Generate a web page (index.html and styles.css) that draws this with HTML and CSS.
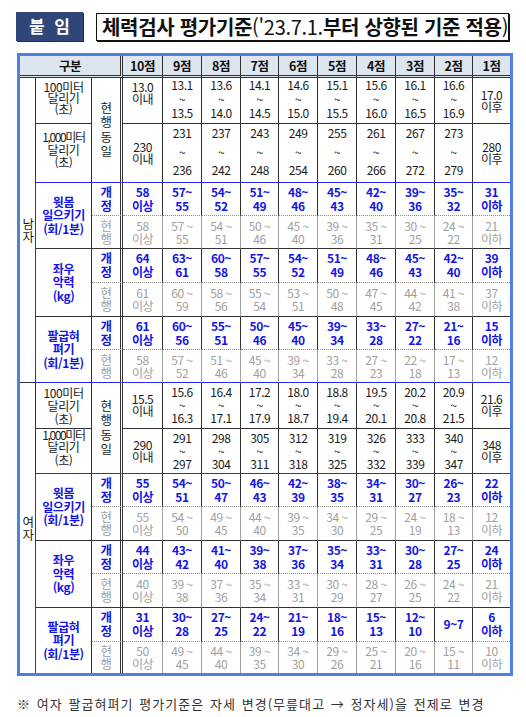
FILE: index.html
```html
<!DOCTYPE html>
<html lang="ko">
<head>
<meta charset="utf-8">
<title>체력검사 평가기준</title>
<link rel="stylesheet" href="styles.css">
</head>
<body>
<div class="top">
  <div class="badge">붙 임</div>
  <div class="title">체력검사 평가기준<span class="thin">('23.7.1.</span>부터 상향된 기준 적용<span class="thin">)</span></div>
</div>
<div class="frame">
<table class="grid">
<colgroup>
<col class="w15"><col class="w57"><col class="w31"><col class="w40"><col class="w39"><col class="w39"><col class="w38"><col class="w39"><col class="w39"><col class="w39"><col class="w39"><col class="w38"><col class="w37">
</colgroup>
<tr class="hd">
<th colspan="3" class="dbl">구분</th><th>10점</th><th>9점</th><th>8점</th><th>7점</th><th>6점</th><th>5점</th><th>4점</th><th>3점</th><th>2점</th><th class="last">1점</th>
</tr>

<tr class="m100">
<td class="g" rowspan="8">남<br>자</td>
<td class="it itop">100미터<br>달리기<br>(초)</td>
<td class="lb" rowspan="2">현<br>행<br>동<br>일</td>
<td class="ed etop">13.0<br>이내</td>
<td class="rg">13.1<br>~<br>13.5</td>
<td class="rg">13.6<br>~<br>14.0</td>
<td class="rg">14.1<br>~<br>14.5</td>
<td class="rg">14.6<br>~<br>15.0</td>
<td class="rg">15.1<br>~<br>15.5</td>
<td class="rg">15.6<br>~<br>16.0</td>
<td class="rg">16.1<br>~<br>16.5</td>
<td class="rg">16.6<br>~<br>16.9</td>
<td class="ed last">17.0<br>이후</td>
</tr>
<tr class="m1000 bb">
<td class="it it1k"><span class="cn">1,000미터</span><br>달리기<br>(초)</td>
<td class="ed">230<br>이내</td>
<td class="rg">231<br>~<br>236</td>
<td class="rg">237<br>~<br>242</td>
<td class="rg">243<br>~<br>248</td>
<td class="rg">249<br>~<br>254</td>
<td class="rg">255<br>~<br>260</td>
<td class="rg">261<br>~<br>266</td>
<td class="rg">267<br>~<br>272</td>
<td class="rg">273<br>~<br>279</td>
<td class="ed last">280<br>이후</td>
</tr>

<tr class="new ra">
<td class="it rev" rowspan="2">윗몸<br>일으키기<br>(회/1분)</td>
<td class="sb">개<br>정</td>
<td>58<br>이상</td><td>57~<br>55</td><td>54~<br>52</td><td>51~<br>49</td><td>48~<br>46</td><td>45~<br>43</td><td>42~<br>40</td><td>39~<br>36</td><td>35~<br>32</td><td class="last">31<br>이하</td>
</tr>
<tr class="cur ra">
<td class="sb">현<br>행</td>
<td>58<br>이상</td><td>57 ~<br>55</td><td>54 ~<br>51</td><td>50 ~<br>46</td><td>45 ~<br>40</td><td>39 ~<br>36</td><td>35 ~<br>31</td><td>30 ~<br>25</td><td>24 ~<br>22</td><td class="last">21<br>이하</td>
</tr>
<tr class="new rb">
<td class="it rev" rowspan="2">좌우<br>악력<br>(kg)</td>
<td class="sb">개<br>정</td>
<td>64<br>이상</td><td>63~<br>61</td><td>60~<br>58</td><td>57~<br>55</td><td>54~<br>52</td><td>51~<br>49</td><td>48~<br>46</td><td>45~<br>43</td><td>42~<br>40</td><td class="last">39<br>이하</td>
</tr>
<tr class="cur rb">
<td class="sb">현<br>행</td>
<td>61<br>이상</td><td>60 ~<br>59</td><td>58 ~<br>56</td><td>55 ~<br>54</td><td>53 ~<br>51</td><td>50 ~<br>48</td><td>47 ~<br>45</td><td>44 ~<br>42</td><td>41 ~<br>38</td><td class="last">37<br>이하</td>
</tr>
<tr class="new ra">
<td class="it rev bbc" rowspan="2">팔굽혀<br>펴기<br>(회/1분)</td>
<td class="sb">개<br>정</td>
<td>61<br>이상</td><td>60~<br>56</td><td>55~<br>51</td><td>50~<br>46</td><td>45~<br>40</td><td>39~<br>34</td><td>33~<br>28</td><td>27~<br>22</td><td>21~<br>16</td><td class="last">15<br>이하</td>
</tr>
<tr class="cur ra bb">
<td class="sb">현<br>행</td>
<td>58<br>이상</td><td>57 ~<br>52</td><td>51 ~<br>46</td><td>45 ~<br>40</td><td>39 ~<br>34</td><td>33 ~<br>28</td><td>27 ~<br>23</td><td>22 ~<br>18</td><td>17 ~<br>13</td><td class="last">12<br>이하</td>
</tr>

<tr class="f100">
<td class="g" rowspan="8">여<br>자</td>
<td class="it">100미터<br>달리기<br>(초)</td>
<td class="lb" rowspan="2">현<br>행<br>동<br>일</td>
<td class="ed">15.5<br>이내</td>
<td class="rg">15.6<br>~<br>16.3</td>
<td class="rg">16.4<br>~<br>17.1</td>
<td class="rg">17.2<br>~<br>17.9</td>
<td class="rg">18.0<br>~<br>18.7</td>
<td class="rg">18.8<br>~<br>19.4</td>
<td class="rg">19.5<br>~<br>20.1</td>
<td class="rg">20.2<br>~<br>20.8</td>
<td class="rg">20.9<br>~<br>21.5</td>
<td class="ed last">21.6<br>이후</td>
</tr>
<tr class="f1000 bb">
<td class="it it1k"><span class="cn">1,000미터</span><br>달리기<br>(초)</td>
<td class="ed">290<br>이내</td>
<td class="rg">291<br>~<br>297</td>
<td class="rg">298<br>~<br>304</td>
<td class="rg">305<br>~<br>311</td>
<td class="rg">312<br>~<br>318</td>
<td class="rg">319<br>~<br>325</td>
<td class="rg">326<br>~<br>332</td>
<td class="rg">333<br>~<br>339</td>
<td class="rg">340<br>~<br>347</td>
<td class="ed last">348<br>이후</td>
</tr>

<tr class="new ra">
<td class="it rev" rowspan="2">윗몸<br>일으키기<br>(회/1분)</td>
<td class="sb">개<br>정</td>
<td>55<br>이상</td><td>54~<br>51</td><td>50~<br>47</td><td>46~<br>43</td><td>42~<br>39</td><td>38~<br>35</td><td>34~<br>31</td><td>30~<br>27</td><td>26~<br>23</td><td class="last">22<br>이하</td>
</tr>
<tr class="cur rb">
<td class="sb">현<br>행</td>
<td>55<br>이상</td><td>54 ~<br>50</td><td>49 ~<br>45</td><td>44 ~<br>40</td><td>39 ~<br>35</td><td>34 ~<br>30</td><td>29 ~<br>25</td><td>24 ~<br>19</td><td>18 ~<br>13</td><td class="last">12<br>이하</td>
</tr>
<tr class="new ra">
<td class="it rev" rowspan="2">좌우<br>악력<br>(kg)</td>
<td class="sb">개<br>정</td>
<td>44<br>이상</td><td>43~<br>42</td><td>41~<br>40</td><td>39~<br>38</td><td>37~<br>36</td><td>35~<br>34</td><td>33~<br>31</td><td>30~<br>28</td><td>27~<br>25</td><td class="last">24<br>이하</td>
</tr>
<tr class="cur rb">
<td class="sb">현<br>행</td>
<td>40<br>이상</td><td>39 ~<br>38</td><td>37 ~<br>36</td><td>35 ~<br>34</td><td>33 ~<br>31</td><td>30 ~<br>29</td><td>28 ~<br>27</td><td>26 ~<br>25</td><td>24 ~<br>22</td><td class="last">21<br>이하</td>
</tr>
<tr class="new rb">
<td class="it rev nob" rowspan="2">팔굽혀<br>펴기<br>(회/1분)</td>
<td class="sb">개<br>정</td>
<td>31<br>이상</td><td>30~<br>28</td><td>27~<br>25</td><td>24~<br>22</td><td>21~<br>19</td><td>18~<br>16</td><td>15~<br>13</td><td>12~<br>10</td><td>9~7</td><td class="last">6<br>이하</td>
</tr>
<tr class="cur rc end">
<td class="sb">현<br>행</td>
<td>50<br>이상</td><td>49 ~<br>45</td><td>44 ~<br>40</td><td>39 ~<br>35</td><td>34 ~<br>30</td><td>29 ~<br>26</td><td>25 ~<br>21</td><td>20 ~<br>16</td><td>15 ~<br>11</td><td class="last">10<br>이하</td>
</tr>
</table>
</div>
<p class="note">※ 여자 팔굽혀펴기 평가기준은 자세 변경(무릎대고 → 정자세)을 전제로 변경</p>
</body>
</html>
```

FILE: styles.css
```css
* { box-sizing: border-box; }
body {
  margin: 0;
  width: 526px;
  background: #fff;
  color: #1a1a1a;
  font-family: "Noto Sans CJK KR", "Noto Sans", sans-serif;
}
.top {
  display: flex;
  align-items: flex-start;
  gap: 13px;
  padding: 12px 0 0 16px;
}
.badge {
  width: 67px;
  height: 29px;
  background: #2f4778;
  color: #fff;
  font-weight: 700;
  font-size: 17px;
  line-height: 28px;
  text-align: center;
  word-spacing: 5px;
  box-shadow: 1px 1px 0 #1d2c4d;
}
.title {
  width: 413px;
  height: 28px;
  margin-top: 1px;
  border: 1px solid #111;
  box-shadow: 1px 1px 0 #111;
  font-size: 20px;
  font-weight: 700;
  line-height: 25px;
  padding-left: 5px;
  white-space: nowrap;
  letter-spacing: -0.3px;
  color: #111;
}
.thin { font-weight: 400; }

.frame {
  margin: 12px 0 0 17px;
  width: 496px;
  border: 3px solid #4f7fe0;
}
.grid {
  width: 490px;
  table-layout: fixed;
  border-collapse: separate;
  border-spacing: 0;
}
.w15 { width: 15px; }
.w57 { width: 57px; }
.w31 { width: 31px; }
.w40 { width: 40px; }
.w39 { width: 39px; }
.w38 { width: 38px; }
.w37 { width: 37px; }

.grid td, .grid th {
  padding: 0;
  text-align: center;
  vertical-align: middle;
  font-size: 12px;
  letter-spacing: -0.4px;
  line-height: 13px;
  font-weight: 400;
  border-right: 1px solid #333;
  border-bottom: 1px solid #333;
  white-space: nowrap;
}
.grid th {
  background: #dde5ef;
  font-weight: 700;
  font-size: 12.5px;
  border-bottom: 3px double #333;
  color: #111;
}
.grid th.dbl { border-right: 3px double #333; }
.grid .last { border-right: none; }

.hd { height: 22px; }
.m100 { height: 44px; }
.m1000 { height: 57px; }
.f100 { height: 46px; }
.f1000 { height: 45px; }
.ra { height: 33px; }
.rb { height: 34px; }
.rc { height: 31px; }

.grid td.g {
  border-right: none;
  font-size: 12.5px;
  line-height: 13px;
  padding-left: 1px;
}
.grid td.it {
  border-left: 1px solid #333;
  line-height: 13px;
}
.grid td.itop { vertical-align: top; line-height: 11px; padding-top: 3px; }
.grid td.it1k { line-height: 12.5px; padding-bottom: 6px; }
.cn { letter-spacing: -1.4px; }
.grid td.rev {
  border-left-color: #2828f0;
  color: #1414e8;
  font-weight: 700;
  line-height: 13.5px;
}
.grid td.lb {
  border-right: 3px double #333;
  font-size: 12.5px;
  line-height: 14.3px;
}
.grid td.sb {
  border-right: 3px double #333;
  font-size: 12.5px;
}

.grid td.rg { line-height: 14px; padding-bottom: 3px; }
.m1000 td.rg { line-height: 18.5px; padding-bottom: 2px; }
.f100 td.rg, .f1000 td.rg { line-height: 13px; padding-bottom: 1px; }
.grid td.ed { line-height: 12px; }
.grid td.etop { vertical-align: top; padding-top: 3px; }

.new td { color: #1414e8; font-weight: 700; line-height: 14px; }
.new td.sb, .new td:not(.it) { border-bottom: 1px dotted #888; }
.new td.last { border-bottom: 1px dotted #888; }
.cur td { color: #a0a0a0; border-right-color: #a0a0a0; }
.cur td.last { border-right: none; }
.cur td.sb { border-right: 3px double #333; }

.bb td, .grid td.lb, .grid td.bbc { border-bottom-color: #2828f0; }
.grid td.g { border-bottom-color: #333; }
.end td, .grid td.nob { border-bottom: none; }
.f100 td.g { border-bottom: none; }

.note {
  margin: 20px 0 0;
  padding-left: 17px;
  font-size: 13px;
  line-height: 16px;
  color: #333;
  letter-spacing: 1.05px;
  word-spacing: 1px;
  white-space: nowrap;
}
```
